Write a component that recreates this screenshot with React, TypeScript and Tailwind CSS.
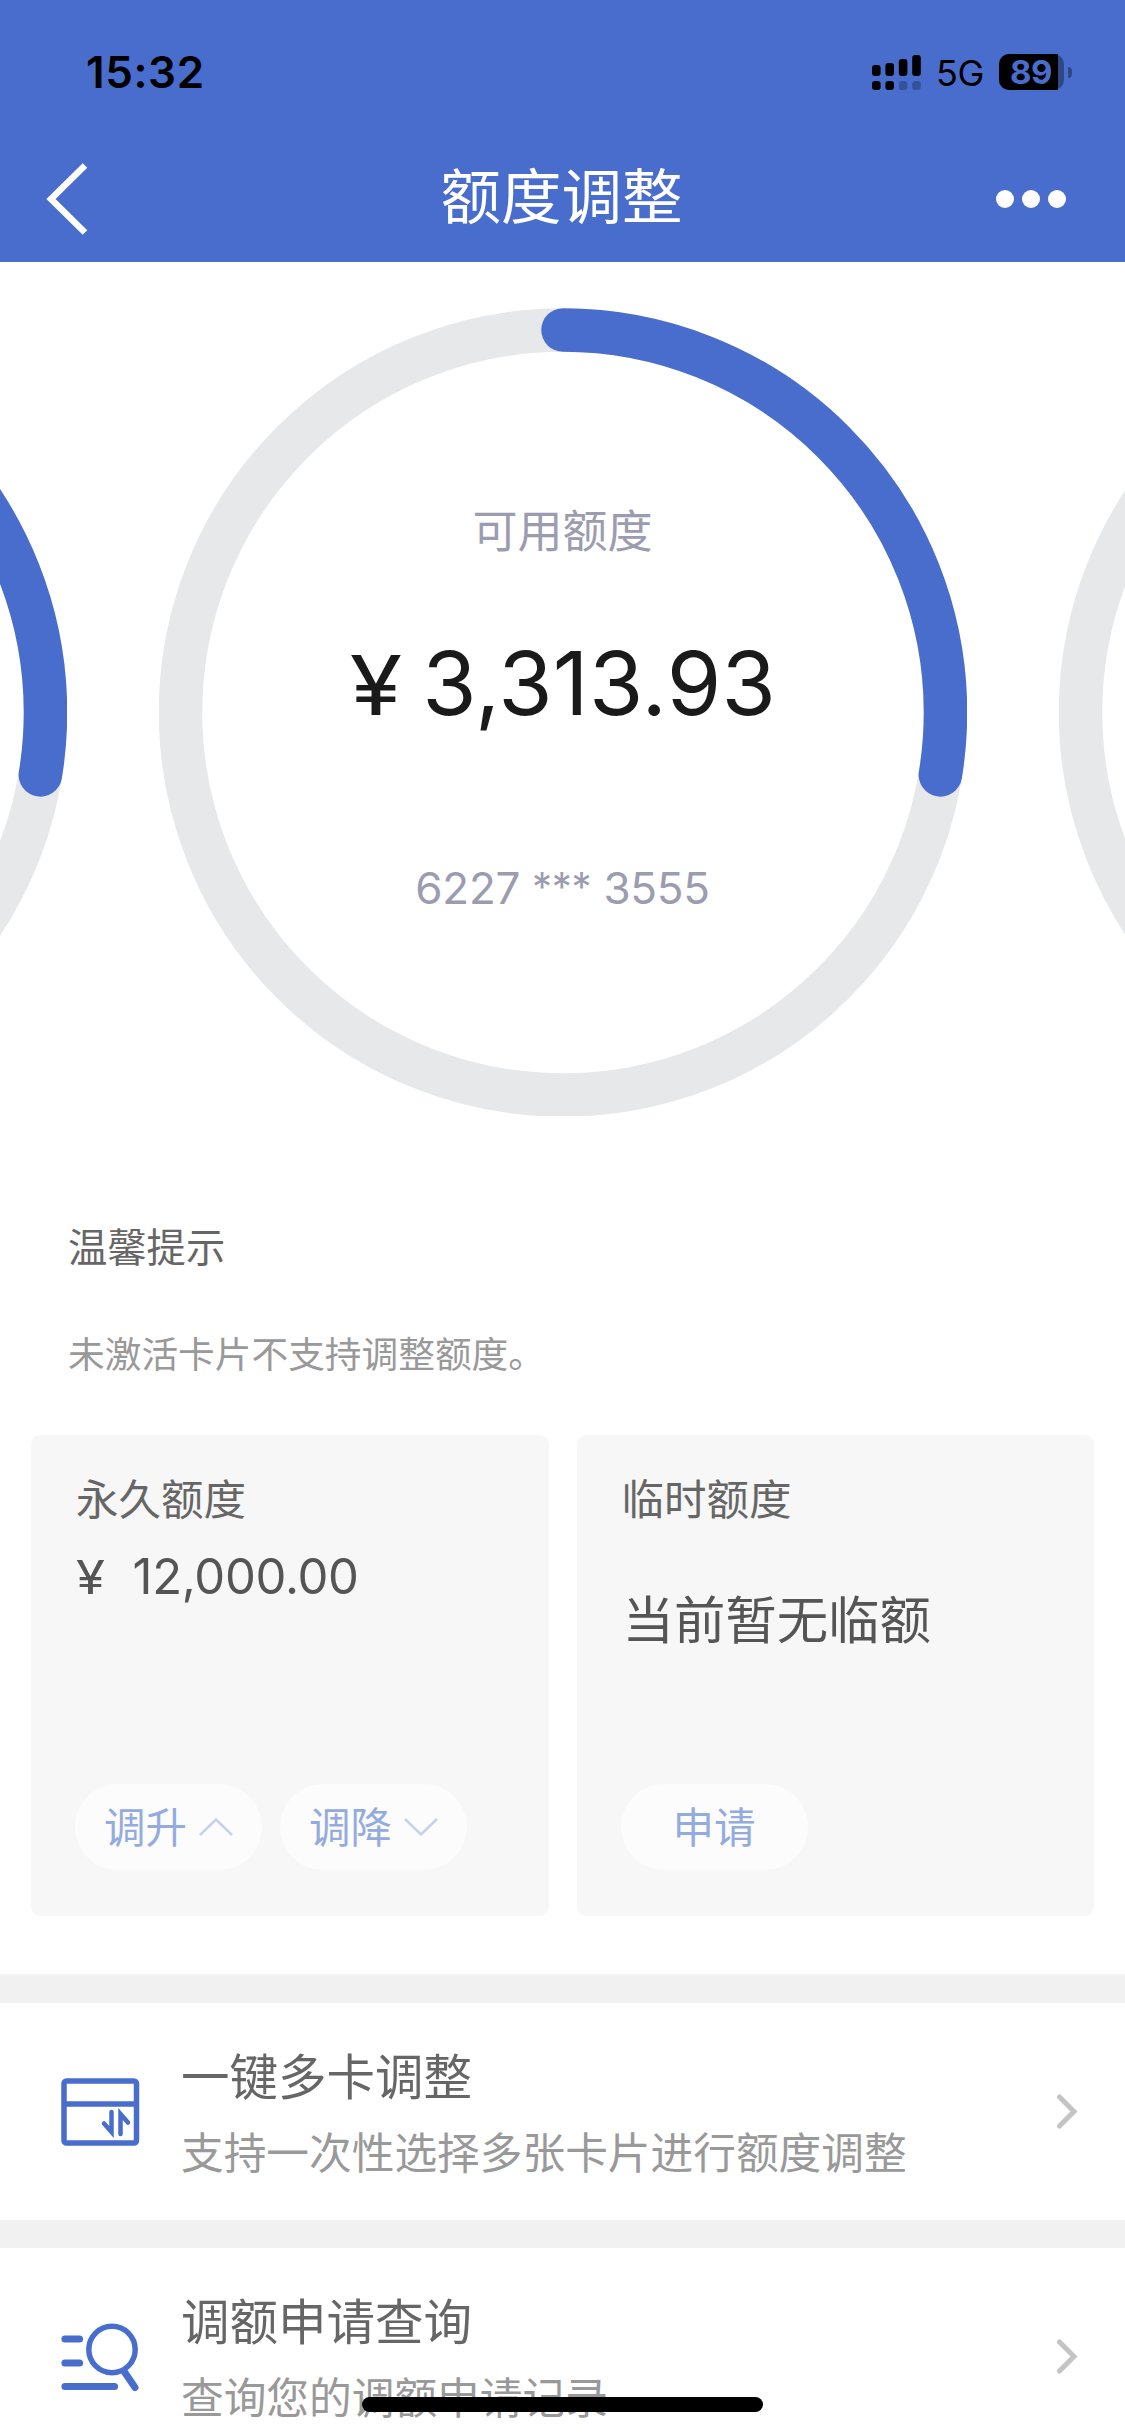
import type { ReactNode } from 'react';

const CARDS = [
  { id: 'prev', available: '3,313.93', number: ['6227', '3555'], used: 0.276, active: false },
  { id: 'current', available: '3,313.93', number: ['6227', '3555'], used: 0.276, active: true },
  { id: 'next', available: '3,313.93', number: ['6227', '3555'], used: 0.276, active: false },
];

const RADIUS = 382.5;
const CIRCUMFERENCE = 2 * Math.PI * RADIUS;

type QuotaRingProps = {
  available: string;
  number: string[];
  used: number;
  active: boolean;
};

function StatusBar() {
  return (
    <div className="flex h-[136px] items-center justify-between pt-[8px] pr-[53px] pl-[86px] font-['Inter'] text-black">
      <span className="text-[44px] leading-none font-semibold tracking-[0.6px]">15:32</span>
      <div className="flex items-center">
        <svg width="49" height="35" viewBox="0 0 49 35" className="mr-[15px]">
          <rect x="0" y="10" width="8.6" height="11" rx="3" />
          <rect x="13.4" y="8" width="8.6" height="13" rx="3" />
          <rect x="26.8" y="4" width="8.6" height="17" rx="3" />
          <rect x="40.2" y="0" width="8.6" height="21" rx="3" />
          <rect x="0" y="26" width="8.6" height="9" rx="3" />
          <rect x="13.4" y="26" width="8.6" height="9" rx="3" />
          <rect x="26.8" y="26" width="8.6" height="9" rx="3" opacity="0.25" />
          <rect x="40.2" y="26" width="8.6" height="9" rx="3" opacity="0.25" />
        </svg>
        <span className="mt-[2px] mr-[15px] w-[48px] text-[36px] leading-none tracking-[-0.5px]">5G</span>
        <div className="flex items-center gap-[4px]">
          <div className="flex h-[36px] w-[65px] rounded-[10px] bg-black/35">
            <span className="flex w-[59px] items-center justify-center rounded-l-[10px] bg-black pl-[5px] text-[33px] leading-none font-bold tracking-[-0.5px] text-[#496dcc]">
              89
            </span>
          </div>
          <span className="h-[11px] w-[4px] rounded-r-full bg-black/35" />
        </div>
      </div>
    </div>
  );
}

function NavBar() {
  return (
    <div className="flex h-[126px] items-center justify-between pr-[59px] pl-[46px] text-white">
      <svg width="60" height="72" viewBox="0 0 60 72" fill="none" stroke="currentColor" strokeWidth="6.5">
        <path d="M39 2.5 5 36l34 33.500" />
      </svg>
      <h1 className="mb-[12px] ml-[21px] text-[60.500px] leading-none">额度调整</h1>
      <div className="flex w-[70px] justify-end gap-[8px]">
        <span className="size-[18px] shrink-0 rounded-full bg-white" />
        <span className="size-[18px] shrink-0 rounded-full bg-white" />
        <span className="size-[18px] shrink-0 rounded-full bg-white" />
      </div>
    </div>
  );
}

function QuotaRing({ available, number, used, active }: QuotaRingProps) {
  return (
    <div className="relative size-[808px] shrink-0">
      <svg width="808" height="808" viewBox="0 0 808 808" fill="none" strokeWidth="43.500">
        <circle cx="404" cy="404.5" r={RADIUS} stroke="#e6e8ea" />
        <circle
          cx="404"
          cy="404.5"
          r={RADIUS}
          stroke="#496dcc"
          strokeLinecap="round"
          strokeDasharray={`${CIRCUMFERENCE * used} ${CIRCUMFERENCE}`}
          transform="rotate(-90 404 404.5)"
        />
      </svg>
      {/* Text over the ring, only on the selected card */}
      {active && (
        <div className="absolute inset-0 flex flex-col items-center pt-[191px] text-[#9c9cb0]">
          <p className="text-[45px] leading-[60px]">可用额度</p>
          <p className="mt-[74px] ml-[8px] font-['Inter'] text-[88px] leading-[100px] tracking-[0.3px] whitespace-pre text-[#1a1a1a]">
            <span className="mr-[20px] inline-block origin-right scale-x-[1.16] text-[82px]">¥</span>
            {available}
          </p>
          <p className="mt-[122px] font-['Inter'] text-[44px] leading-[60px] tracking-[-0.300px]">
            {number[0]} <span className="align-[3px] text-[40px] leading-none">***</span> {number[1]}
          </p>
        </div>
      )}
    </div>
  );
}

function PillButton({ label, direction }: { label: string; direction?: 'up' | 'down' }) {
  return (
    <button className="flex h-[86px] w-[187px] items-center justify-center gap-[12px] rounded-full bg-[#fcfcfc] text-[41.500px] leading-none text-[#94abe0]">
      <span className="-mt-[3px]">{label}</span>
      {direction && (
        <svg width="34" height="18" viewBox="0 0 34 18" fill="none" stroke="#c5d2ef" strokeWidth="2.500">
          <path d={direction === 'up' ? 'M1 17 17 1.500 33 17' : 'M1 1l16 15.500L33 1'} />
        </svg>
      )}
    </button>
  );
}

function LimitCard({ title, children, actions }: { title: string; children: ReactNode; actions: ReactNode }) {
  return (
    <div className="flex h-[481px] w-[517.500px] flex-col rounded-[9px] bg-[#f7f7f7] pt-[37px] pb-[46px] pl-[44px] text-[#555]">
      <h3 className="ml-[1px] text-[42.500px] leading-[50px] text-[#666]">{title}</h3>
      {children}
      <div className="mt-auto flex gap-[18px]">{actions}</div>
    </div>
  );
}

function MenuRow({ icon, title, subtitle }: { icon: ReactNode; title: string; subtitle: string }) {
  return (
    <div className="flex h-[217px] items-center bg-white pr-[47px] pl-[61px]">
      {icon}
      <div className="mt-[1px] ml-[41px] flex-1 whitespace-nowrap">
        <p className="text-[48.500px] leading-[60px] text-[#666]">{title}</p>
        <p className="mt-[16px] text-[42.700px] leading-[60px] text-[#999]">{subtitle}</p>
      </div>
      <svg width="22" height="36" viewBox="0 0 22 36" fill="none" stroke="#c4c4c4" strokeWidth="5" strokeLinecap="round">
        <path d="M3.500 3 18 17.500 3.500 32" />
      </svg>
    </div>
  );
}

function CardSwapIcon() {
  return (
    <svg width="79" height="68" viewBox="0 0 79 68" fill="none" stroke="#496dcc" strokeWidth="5.500" className="shrink-0">
      <rect x="3" y="3" width="72.500" height="62" rx="2.500" />
      <path d="M3 26h72.500" />
      <path d="M50.500 34v20l-7.500-8.500" strokeWidth="4.500" strokeLinecap="round" />
      <path d="M59.500 56V36l7.500 8.500" strokeWidth="4.500" strokeLinecap="round" />
    </svg>
  );
}

function SearchListIcon() {
  return (
    <svg width="79" height="70" viewBox="0 0 79 70" fill="none" stroke="#496dcc" strokeLinecap="round" className="shrink-0">
      <circle cx="51" cy="27.5" r="23.200" strokeWidth="5.500" />
      <path d="M63.500 50 74 65.500" strokeWidth="7" />
      <path d="M4 17h14.500M4 41h14.500M4 64.500h49.500" strokeWidth="7.200" />
    </svg>
  );
}

export default function App() {
  return (
    <div className="relative h-[2435px] w-[1125px] overflow-hidden bg-white font-['Noto_Sans_CJK_SC',sans-serif]">
      <header className="bg-[#496dcc]">
        <StatusBar />
        <NavBar />
      </header>

      {/* Card carousel */}
      <section className="flex justify-center gap-[92px] overflow-hidden pt-[46px]">
        {CARDS.map((card) => (
          <QuotaRing
            key={card.id}
            available={card.available}
            number={card.number}
            used={card.used}
            active={card.active}
          />
        ))}
      </section>

      <section className="mt-[99px] pl-[68px]">
        <h2 className="text-[39.300px] leading-[60px] text-[#666]">温馨提示</h2>
        <p className="mt-[47px] text-[36.700px] leading-[60px] text-[#999]">未激活卡片不支持调整额度。</p>
      </section>

      <section className="mt-[53px] flex gap-[28px] pl-[31px]">
        <LimitCard
          title="永久额度"
          actions={
            <>
              <PillButton label="调升" direction="up" />
              <PillButton label="调降" direction="down" />
            </>
          }
        >
          <p className="mt-[25px] font-['Inter'] text-[49px] leading-[60px] tracking-[-0.300px]">
            <span className="mr-[31px] ml-[1px] inline-block origin-left scale-x-[1.12] text-[47px]">¥</span>
            12,000.00
          </p>
        </LimitCard>
        <LimitCard title="临时额度" actions={<PillButton label="申请" />}>
          <p className="mt-[65px] ml-[2px] text-[51.400px] leading-[60px]">当前暂无临额</p>
        </LimitCard>
      </section>

      <div className="mt-[58px] h-[29px] bg-[#f1f1f1]" />
      <MenuRow icon={<CardSwapIcon />} title="一键多卡调整" subtitle="支持一次性选择多张卡片进行额度调整" />
      <div className="h-[28px] bg-[#f1f1f1]" />
      <MenuRow icon={<SearchListIcon />} title="调额申请查询" subtitle="查询您的调额申请记录" />

      {/* Home indicator */}
      <div className="absolute bottom-[23px] left-[362px] h-[15px] w-[401px] rounded-full bg-black" />
    </div>
  );
}
